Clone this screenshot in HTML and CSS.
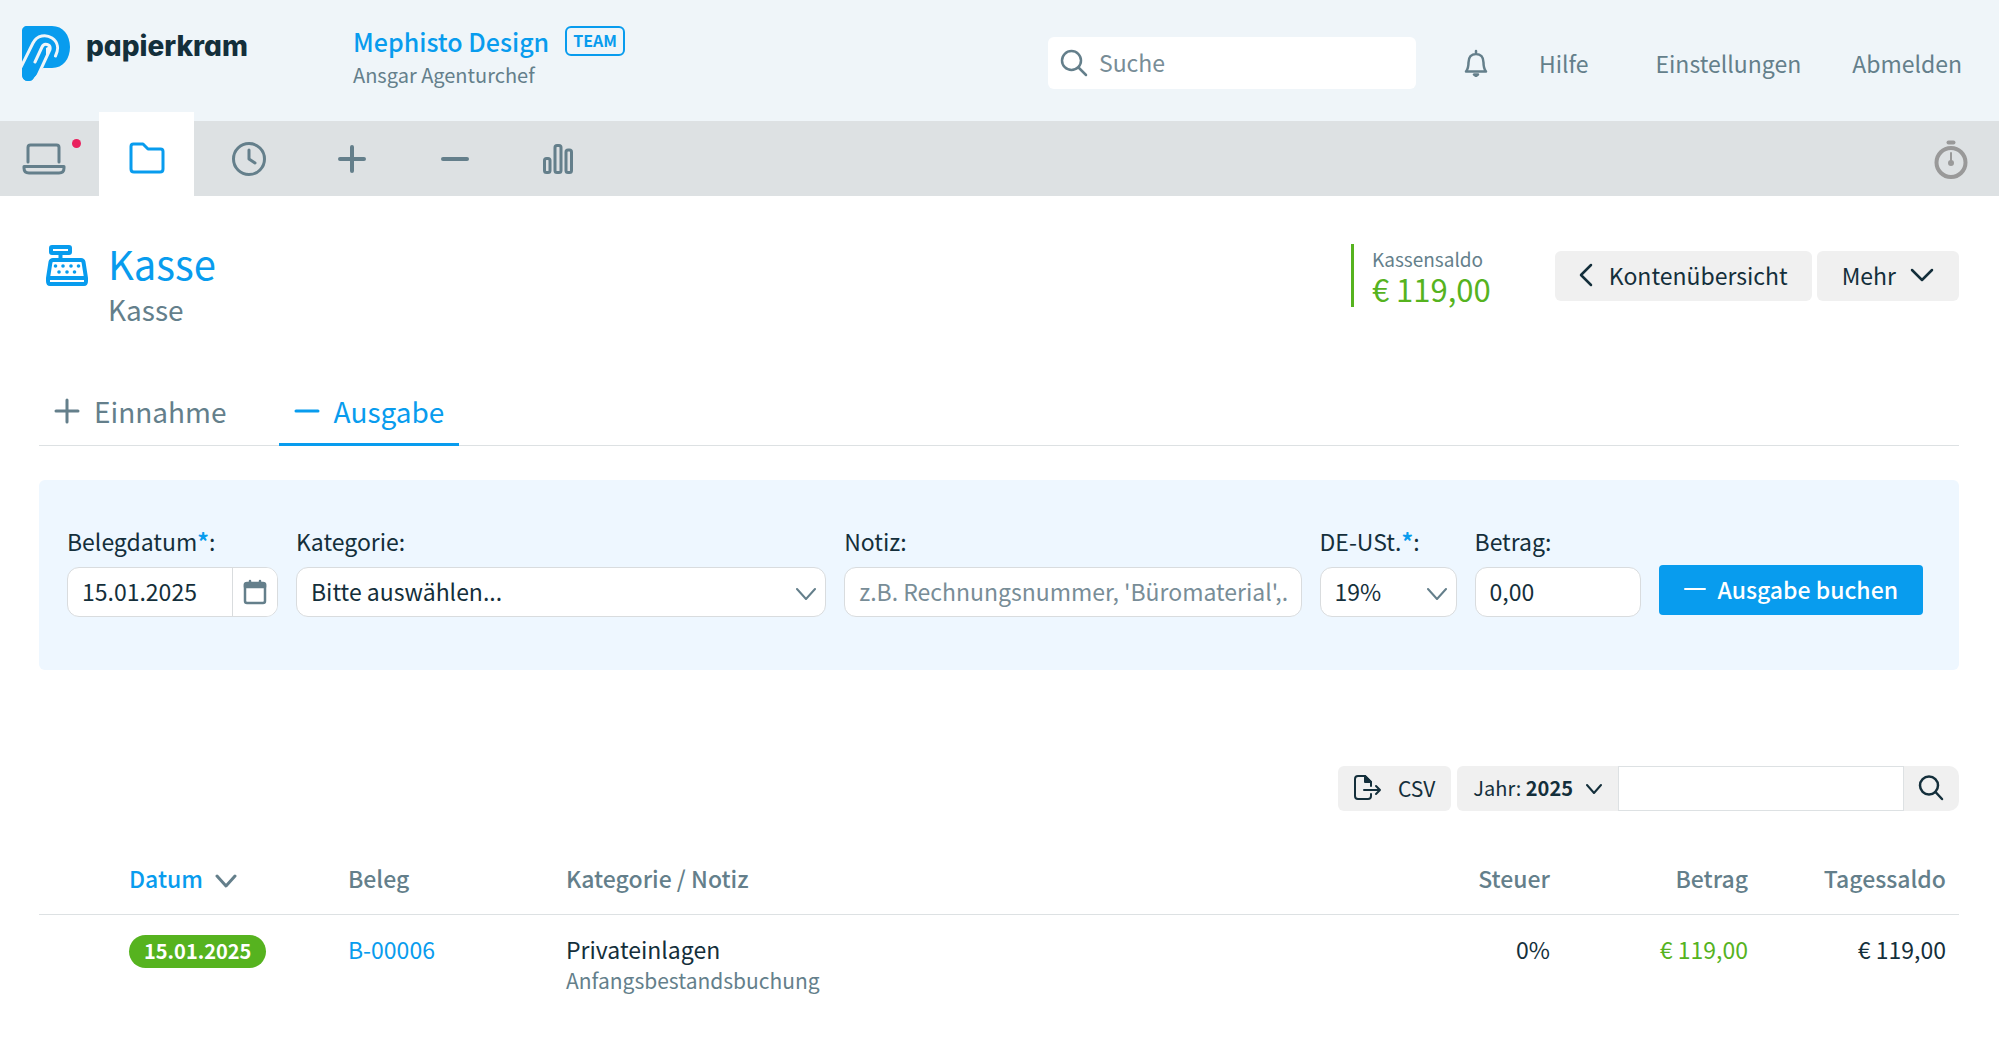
FILE: index.html
```html
<!DOCTYPE html>
<html lang="de">
<head>
<meta charset="utf-8">
<title>Kasse</title>
<link rel="stylesheet" href="styles.css">
</head>
<body>
<header class="top">
  <a class="brand" href="#" aria-label="papierkram">
    <svg class="brand-mark" width="48" height="56" viewBox="0 0 48 56">
      <path fill="#089cee" d="M5 0H30C41 0 48 9 48 21S41 42 30 42H21L23 35C26 28 28 24 28.500 22.500L27.500 20L24 22L24 42L21.500 42L12 51.500C11 54 9 55 6 55C2 55 0 52 0 48V5C0 2 2 0 5 0Z"/>
      <path fill="#eff5f9" d="M21.500 42L12 56H30V42Z"/>
      <path fill="#089cee" d="M0 48L12 24L24 22L22 38.500L12 51.500C11 54 9 55 6 55C2 55 0 52 0 48Z"/>
      <path fill="none" stroke="#eff5f9" stroke-width="3" stroke-linecap="round" d="M-1 41L11 17C15 9 24 8 30 12C36 16 37 23 33.500 30M13 36L20 21C22 16.500 29 18 28 23.500L13 56"/>
    </svg>
    <span class="brand-name">papierkram</span>
  </a>
  <div class="account">
    <div class="account-line"><a class="company" href="#">Mephisto Design</a><span class="plan">TEAM</span></div>
    <div class="user">Ansgar Agenturchef</div>
  </div>
  <label class="search">
    <svg width="28" height="28" viewBox="0 0 28 28" class="ic chev"><circle cx="11.500" cy="11.500" r="9.500"/><path d="M18.500 18.500L26 26"/></svg>
    <input type="search" placeholder="Suche" aria-label="Suche">
  </label>
  <nav class="links">
    <a class="bell" href="#" aria-label="Mitteilungen"><svg width="24" height="28" viewBox="0 0 24 28" class="ic chev"><path d="M12 2V5M2 22.500C4 20 4.500 18 4.500 13.500C4.500 8 7.500 5 12 5S19.500 8 19.500 13.500C19.500 18 20 20 22 22.500Z"/><path class="solid" d="M10 25.500H14L12 27Z"/></svg></a>
    <a href="#">Hilfe</a><a class="settings" href="#">Einstellungen</a><a href="#">Abmelden</a>
  </nav>
</header>
<nav class="mainnav">
  <a class="first" href="#" aria-label="Dashboard"><svg width="44" height="32" viewBox="0 0 44 32" class="ic w3"><path d="M6 19V4.500Q6 2 8.500 2H34.500Q37 2 37 4.500V19M2 23.500H42V25Q42 30 37 30H7Q2 30 2 25Z"/></svg><i class="dot"></i></a>
  <a class="active" href="#" aria-label="Projekte"><svg width="36" height="32" viewBox="0 0 36 32" class="ic w3"><path d="M2 4.500Q2 2 4.500 2H14L19 7H31.500Q34 7 34 9.500V27Q34 30 31 30H5Q2 30 2 27Z"/></svg></a>
  <a href="#" aria-label="Zeiten"><svg width="36" height="36" viewBox="0 0 36 36" class="ic w3"><circle cx="18" cy="18" r="15.500"/><path d="M18 9V18L24 22"/></svg></a>
  <a href="#" aria-label="Einnahmen"><svg width="30" height="30" viewBox="0 0 30 30" class="ic w4"><path d="M15 3V27M3 15H27"/></svg></a>
  <a href="#" aria-label="Ausgaben"><svg width="30" height="30" viewBox="0 0 30 30" class="ic w4"><path d="M3 15H27"/></svg></a>
  <a href="#" aria-label="Berichte"><svg width="32" height="32" viewBox="0 0 32 32" class="ic w3"><rect x="2.500" y="15.500" width="5.500" height="14" rx="2"/><rect x="13" y="2.500" width="6" height="27" rx="2"/><rect x="24" y="7" width="5.500" height="22.500" rx="2"/></svg></a>
  <a class="timer" href="#" aria-label="Stoppuhr"><svg width="34" height="40" viewBox="0 0 34 40" class="ic w4"><circle cx="17" cy="23.500" r="14.500"/><path class="thin" d="M17 14V24"/><circle class="solid" cx="17" cy="24" r="1"/><path d="M14.500 3.500H19.500"/></svg></a>
</nav>
<main>
  <section class="head">
    <svg class="register ic w4" width="42" height="42" viewBox="0 0 42 42"><rect x="5" y="3" width="19" height="6" rx="1"/><path d="M14.500 9V15M7 16H35Q37 16 37.500 18L40 34V37Q40 40 38 40H4Q2 40 2 37V34L4.500 18Q5 16 7 16ZM2 34H40"/><g class="solid dots"><circle cx="9.500" cy="22" r="1.800"/><circle cx="17" cy="22" r="1.800"/><circle cx="25" cy="22" r="1.800"/><circle cx="32.500" cy="22" r="1.800"/><circle cx="13" cy="28" r="1.800"/><circle cx="21" cy="28" r="1.800"/><circle cx="28.500" cy="28" r="1.800"/></g></svg>
    <div class="titles"><h1>Kasse</h1><p>Kasse</p></div>
    <div class="balance"><span>Kassensaldo</span><strong>€ 119,00</strong></div>
    <div class="actions">
      <button type="button"><svg width="14" height="24" viewBox="0 0 14 24" class="ic chev"><path d="M12 2L2 12L12 22"/></svg>Kontenübersicht</button>
      <button type="button" class="more">Mehr<svg width="24" height="14" viewBox="0 0 24 14" class="ic chev"><path d="M2 2L12 12L22 2"/></svg></button>
    </div>
  </section>
  <nav class="tabs">
    <a href="#"><svg width="26" height="26" viewBox="0 0 26 26" class="ic w3"><path d="M13 2V24M2 13H24"/></svg>Einnahme</a>
    <a class="current" href="#"><svg width="26" height="26" viewBox="0 0 26 26" class="ic w3"><path d="M2 13H24"/></svg>Ausgabe</a>
  </nav>
  <form class="booking">
    <div class="field date"><label for="date">Belegdatum<b>*</b>:</label>
      <div class="control"><input id="date" type="text" value="15.01.2025"><button type="button" aria-label="Kalender"><svg width="24" height="26" viewBox="0 0 24 26" class="ic chev"><rect x="2" y="4" width="20" height="20" rx="2"/><path class="solid" d="M2 5H22V8H2Z"/><path d="M7 2V4M17 2V4"/></svg></button></div></div>
    <div class="field category"><label for="cat">Kategorie:</label>
      <div class="control"><select id="cat"><option>Bitte auswählen...</option></select><svg width="20" height="12" viewBox="0 0 20 12" class="ic caret"><path d="M1 1L10 11L19 1"/></svg></div></div>
    <div class="field note"><label for="note">Notiz:</label>
      <div class="control"><input id="note" type="text" placeholder="z.B. Rechnungsnummer, 'Büromaterial',..."></div></div>
    <div class="field tax"><label for="tax">DE-USt.<b>*</b>:</label>
      <div class="control"><select id="tax"><option>19%</option></select><svg width="20" height="12" viewBox="0 0 20 12" class="ic caret"><path d="M1 1L10 11L19 1"/></svg></div></div>
    <div class="field amount"><label for="amount">Betrag:</label>
      <div class="control"><input id="amount" type="text" value="0,00"></div></div>
    <button type="submit" class="submit"><svg width="22" height="4" viewBox="0 0 22 4" class="ic"><path d="M1 2H21"/></svg>Ausgabe buchen</button>
  </form>
  <div class="tools">
    <button type="button" class="csv"><svg width="28" height="26" viewBox="0 0 28 26" class="ic"><path d="M17 19V21Q17 24 14 24H4Q1 24 1 21V4Q1 1 4 1H11L17 7V11M10 15H26M22 11L26 15L22 19"/><path class="solid" d="M11 1V7H17Z"/></svg>CSV</button>
    <button type="button" class="year"><span>Jahr: <b>2025</b></span><svg width="16" height="12" viewBox="0 0 16 12" class="ic"><path d="M1 3L8 11L15 3"/></svg></button>
    <input type="text" aria-label="Buchungen durchsuchen">
    <button type="button" class="find" aria-label="Suchen"><svg width="26" height="26" viewBox="0 0 26 26" class="ic chev"><circle cx="11" cy="10.500" r="9"/><path d="M17.500 17L24 24"/></svg></button>
  </div>
  <table>
    <colgroup><col class="c1"><col class="c2"><col><col class="c4"><col class="c5"><col class="c6"></colgroup>
    <thead><tr><th class="sorted"><a href="#">Datum</a><svg width="22" height="14" viewBox="0 0 22 14" class="ic w3"><path d="M2 2L11 12L20 2"/></svg></th><th>Beleg</th><th>Kategorie / Notiz</th><th class="num">Steuer</th><th class="num">Betrag</th><th class="num">Tagessaldo</th></tr></thead>
    <tbody><tr><td class="first-cell"><span class="pill">15.01.2025</span></td><td><a href="#">B-00006</a></td><td>Privateinlagen<span class="sub">Anfangsbestandsbuchung</span></td><td class="num">0%</td><td class="num plus">€ 119,00</td><td class="num">€ 119,00</td></tr></tbody>
  </table>
</main>
</body>
</html>
```

FILE: styles.css
```css
* { box-sizing: border-box; }
body {
  margin: 0;
  background: #fff;
  color: #142f3b;
  font: 23px/32px "Noto Sans CJK SC", "Noto Sans", sans-serif;
}
a { color: #089cee; text-decoration: none; }
button, input, select { font: inherit; color: inherit; margin: 0; }
button { border: 0; background: #f0f0f0; display: flex; align-items: center; white-space: nowrap; }
svg { flex: none; display: block; }
h1, p { margin: 0; font-weight: 400; }

.ic { fill: none; stroke: currentColor; stroke-width: 2; stroke-linecap: round; stroke-linejoin: round; }
.chev { stroke-width: 2.5; }
.w3 { stroke-width: 3; }
.w4 { stroke-width: 4; }
.thin { stroke-width: 2; }
.solid { fill: currentColor; }
.dots { stroke: none; }

.top { display: flex; align-items: flex-start; height: 121px; padding: 26px 37px 0 22px; background: #eff5f9; }
.brand { display: flex; gap: 16px; width: 331px; }
.brand-name { color: #142f3b; font: 800 28px/40px Inter, sans-serif; font-feature-settings: "cv11"; }
.account-line { display: flex; gap: 16px; height: 33px; }
.company { font-size: 25px; line-height: 30px; font-weight: 500; }
.plan { height: 30px; padding: 0 6px; border: 2px solid #089cee; border-radius: 6px; color: #089cee; font-size: 16px; line-height: 25px; font-weight: 700; }
.user { font-size: 20px; color: #647f8b; }
.search { display: flex; align-items: center; gap: 11px; width: 368px; height: 52px; margin: 11px 48px 0 auto; padding: 0 12px; border-radius: 6px; background: #fff; color: #647f8b; }
.search input { flex: 1; min-width: 0; padding: 0 0 2px; border: 0; outline: 0; background: none; }
input::placeholder { color: #788d97; opacity: 1; }
.links { display: flex; align-items: center; gap: 51px; margin-top: 21px; }
.links a { color: #647f8b; }
.links .settings { margin-left: 16px; }

.mainnav { display: flex; align-items: center; height: 75px; padding-right: 31px; background: #dde1e3; }
.mainnav a { display: flex; align-items: center; justify-content: center; width: 103px; height: 75px; color: #647f8b; }
.mainnav .first { position: relative; width: 99px; padding-right: 12px; }
.dot { position: absolute; top: 18px; right: 18px; width: 9px; height: 9px; border-radius: 50%; background: #e9215e; }
.mainnav .active { width: 95px; height: 84px; margin: -9px 3px 0 0; padding-top: 8px; background: #fff; color: #089cee; }
.mainnav .timer { width: auto; margin-left: auto; color: #999; }

main { padding: 0 40px 60px 39px; }
.head { display: flex; align-items: flex-start; padding-top: 48px; }
.register { margin-left: 7px; color: #089cee; }
.titles { margin-left: 20px; flex: 1; }
h1 { font-size: 40px; line-height: 38px; color: #089cee; }
.titles p { font-size: 28px; line-height: 54px; color: #647f8b; }
.balance { display: flex; flex-direction: column; height: 63px; margin-right: 64px; padding-left: 18px; border-left: 3px solid #56b31f; }
.balance span { font-size: 19px; line-height: 30px; color: #647f8b; }
.balance strong { font-size: 31px; line-height: 30px; font-weight: 400; color: #56b31f; }
.actions { display: flex; gap: 5px; margin-top: 7px; }
.actions button { height: 50px; padding: 0 24px 2px; gap: 16px; border-radius: 6px; }
.actions .more { padding: 0 25px 2px; gap: 14px; }

.tabs { display: flex; gap: 37px; margin-top: 44px; border-bottom: 1px solid #dde1e3; }
.tabs a { display: flex; align-items: center; gap: 14px; height: 66px; margin-bottom: -1px; padding: 0 15px 1px; border-bottom: 3px solid transparent; font-size: 28px; color: #647f8b; }
.tabs .current { border-color: #089cee; color: #089cee; }

.booking { display: flex; align-items: flex-end; gap: 18px; margin-top: 34px; padding: 45px 36px 53px 28px; border-radius: 6px; background: #eef7ff; }
.field label { display: block; padding-bottom: 10px; }
.field b { color: #089cee; }
.control { position: relative; display: flex; height: 50px; border: 1px solid #d9dcde; border-radius: 12px; background: #fff; overflow: hidden; }
.control input, .control select { width: 100%; min-width: 0; padding: 0 14px 2px; border: 0; outline: 0; background: none; appearance: none; }
.control button { width: 45px; padding: 0 10px; border-left: 1px solid #d9dcde; background: #fff; color: #647f8b; }
.caret { position: absolute; right: 9px; top: 20px; color: #647f8b; pointer-events: none; }
.date { width: 211px; }
.category { flex: 531; }
.note { flex: 458; }
.tax { width: 137px; }
.amount { width: 166px; }
.submit { height: 50px; margin-bottom: 2px; padding: 0 25px 2px; gap: 12px; border-radius: 4px; background: #089cee; color: #fff; font-weight: 500; }

.tools { display: flex; justify-content: flex-end; margin-top: 96px; font-size: 20px; }
.tools button { height: 45px; padding: 0 16px 2px; }
.tools .csv { gap: 16px; margin-right: 6px; border-radius: 6px; font-size: 21px; }
.tools .year { gap: 13px; border-radius: 6px 0 0 6px; }
.tools input { width: 286px; height: 45px; padding: 0 12px; border: 1px solid #dde1e3; }
.tools .find { padding: 0 15px 2px 14px; border-radius: 0 10px 10px 0; }

table { width: 100%; margin-top: 37px; border-collapse: collapse; table-layout: fixed; }
.c1 { width: 309px; }
.c2 { width: 218px; }
.c4 { width: 200px; }
.c5 { width: 198px; }
.c6 { width: 211px; }
th { height: 66px; padding: 0 0 6px; border-bottom: 1px solid #dde1e3; text-align: left; font-weight: 500; color: #647f8b; }
td { padding: 18px 0 0; vertical-align: top; }
th.sorted, .first-cell { padding-left: 90px; }
.sorted svg { display: inline-block; margin-left: 12px; }
.num { text-align: right; }
.num:last-child { padding-right: 13px; }
.plus { color: #56b31f; }
.sub { display: block; font-size: 21px; line-height: 30px; color: #647f8b; }
.pill { display: inline-block; height: 33px; padding: 0 15px; border-radius: 17px; background: #56b31f; color: #fff; font-size: 20px; line-height: 32px; font-weight: 700; }
```
